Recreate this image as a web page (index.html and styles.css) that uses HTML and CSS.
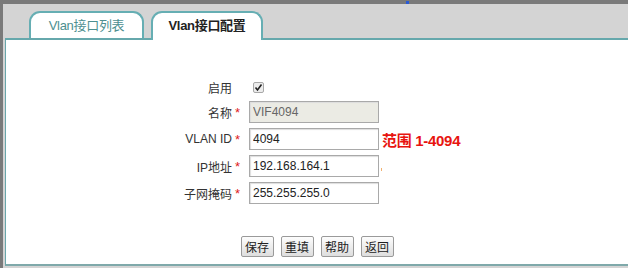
FILE: index.html
```html
<!DOCTYPE html>
<html lang="zh-CN">
<head>
  <meta charset="UTF-8">
  <title>Vlan接口配置</title>
  <link rel="stylesheet" href="styles.css">
</head>
<body>
  <div class="frame">
    <span class="marker"></span>
    <div class="tabs">
      <div class="tab">Vlan接口列表</div>
      <div class="tab active">Vlan接口配置</div>
    </div>

    <div class="panel">
      <div class="form">
        <div class="row first">
          <span class="label">启用</span>
          <span class="star"></span>
          <span class="check">
            <svg width="9" height="9" viewBox="0 0 9 9"><path d="M1.5 4.5 L3.5 7 L7.5 1.5" fill="none" stroke="#222" stroke-width="1.6"/></svg>
          </span>
        </div>
        <div class="row">
          <span class="label">名称</span>
          <span class="star">*</span>
          <input type="text" class="field readonly" value="VIF4094" readonly>
        </div>
        <div class="row">
          <span class="label">VLAN ID</span>
          <span class="star">*</span>
          <input type="text" class="field" value="4094">
          <span class="hint">范围 1-4094</span>
        </div>
        <div class="row">
          <span class="label">IP地址</span>
          <span class="star">*</span>
          <input type="text" class="field" value="192.168.164.1">
          <span class="tick"></span>
        </div>
        <div class="row">
          <span class="label">子网掩码</span>
          <span class="star">*</span>
          <input type="text" class="field" value="255.255.255.0">
        </div>
      </div>

      <div class="buttons">
        <button class="btn">保存</button>
        <button class="btn">重填</button>
        <button class="btn">帮助</button>
        <button class="btn">返回</button>
      </div>
    </div>
  </div>
</body>
</html>
```

FILE: styles.css
```css
html, body {
  margin: 0;
  padding: 0;
  height: 100%;
  overflow: hidden;
}

body {
  font-family: "Liberation Sans", "Noto Sans CJK SC", sans-serif;
  font-size: 12px;
  color: #333;
}

.frame {
  position: relative;
  box-sizing: border-box;
  height: 268px;
  border-top: 4px solid #7a7a7a;
  border-left: 3px solid #7a7a7a;
  background: #d4d4d4;
}

/* little blue handle on the top edge */
.marker {
  position: absolute;
  top: -3px;
  left: 403px;
  width: 3px;
  height: 3px;
  background: #2a5bd6;
}

.tabs {
  display: flex;
  gap: 7px;
  padding: 7px 0 0 26px;
  height: 27px;
}

.tab {
  box-sizing: border-box;
  width: 115px;
  height: 27px;
  border: 2px solid #66aeb3;
  border-bottom: none;
  border-radius: 11px 11px 0 0;
  background: #fff;
  color: #4d8f90;
  font-size: 13px;
  letter-spacing: -0.3px;
  text-align: center;
  line-height: 25px;
}

.tab.active {
  width: 112px;
  height: 29px;
  color: #222;
  font-weight: 600;
  position: relative;
  z-index: 1;
}

.panel {
  box-sizing: border-box;
  height: 228px;
  margin-left: 2px;
  border-top: 2px solid #66a8ac;
  border-left: 1px solid #6aa6aa;
  border-bottom: 2px solid #7fa9aa;
  background: #fff;
  padding-top: 36px;
}

.row {
  display: flex;
  align-items: center;
  height: 22px;
  margin-bottom: 5px;
}

.row.first {
  margin-bottom: 3px;
}

.label {
  width: 226px;
  text-align: right;
  color: #333;
}

.star {
  width: 14px;
  padding-left: 3px;
  color: #e02020;
  font-size: 13px;
}

.check {
  box-sizing: border-box;
  display: flex;
  align-items: center;
  justify-content: center;
  width: 11px;
  height: 11px;
  margin-left: 4px;
  border: 1px solid #a8a8a8;
  border-radius: 2px;
  background: #ececec;
}

.field {
  box-sizing: border-box;
  width: 130px;
  height: 22px;
  margin: 0;
  padding: 0 3px;
  border: 1px solid #a9a9a9;
  box-shadow: inset 1px 1px 1px #ddd;
  font-family: "Liberation Sans", "Noto Sans CJK SC", sans-serif;
  font-size: 12px;
  color: #222;
  outline: none;
}

.field.readonly {
  background: #ebebe4;
  color: #666;
}

.hint {
  margin-left: 3px;
  color: #e8140f;
  font-weight: bold;
  font-size: 15px;
  letter-spacing: -0.3px;
}

.tick {
  width: 1px;
  height: 3px;
  margin: 6px 0 0 2px;
  background: #f0b070;
}

.buttons {
  display: flex;
  justify-content: center;
  gap: 7px;
  margin-top: 32px;
}

.btn {
  box-sizing: border-box;
  width: 33px;
  height: 21px;
  padding: 0;
  border: 1px solid #9a9a9a;
  border-radius: 2px;
  background: linear-gradient(#fdfdfd, #dedede);
  font-family: "Liberation Sans", "Noto Sans CJK SC", sans-serif;
  font-size: 12px;
  color: #222;
}
```
